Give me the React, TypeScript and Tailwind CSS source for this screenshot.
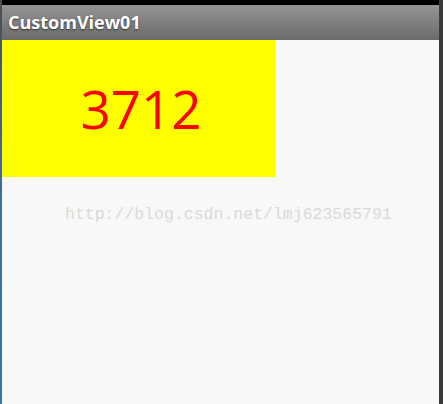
export default function App() {
  return (
    <div className="flex h-[404px] w-[443px] bg-black">
      {/* left edge of the emulator frame */}
      <div className="w-[2px] bg-gradient-to-b from-[#4a4f55] via-[#3f6f96] to-[#2f78b0]" />

      <div className="flex flex-1 flex-col">
        <div className="h-[5px] bg-black" />
        <div
          className="flex h-[35px] items-center bg-gradient-to-b from-[#949494] to-[#6b6b6b] pl-[6px] text-[18px] font-bold text-white [text-shadow:0_1px_2px_rgba(0,0,0,0.6)]"
          style={{ fontFamily: '"Open Sans", "DejaVu Sans", sans-serif' }}
        >
          CustomView01
        </div>

        <div className="flex flex-1 flex-col bg-[#f8f8f8]">
          <div className="flex h-[137px] w-[273px] items-center justify-center bg-[#ffff00]">
            <span
              className="pl-[5px] text-[53px] leading-none text-[#ff0000]"
              style={{ fontFamily: '"Open Sans", "Noto Sans", sans-serif' }}
            >
              3712
            </span>
          </div>
          <div
            className="mt-[30px] pl-[63px] text-[16.5px] leading-none text-[#dadad7]"
            style={{ fontFamily: '"Liberation Mono", monospace' }}
          >
            http://blog.csdn.net/lmj623565791
          </div>
        </div>
      </div>

      {/* right edge of the emulator frame */}
      <div className="w-[4px] bg-[#3b3b3b]" />
    </div>
  );
}
